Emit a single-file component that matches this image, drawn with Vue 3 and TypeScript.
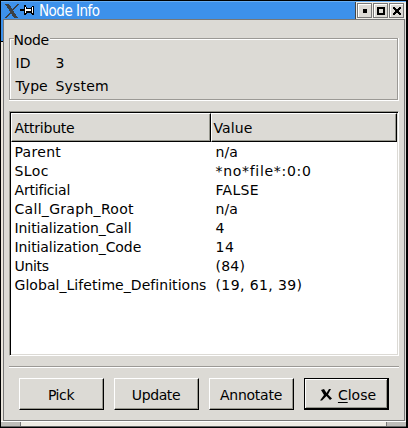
<script setup lang="ts">
interface Label {
  text: string
  tracking: number
}

interface Attribute {
  name: Label
  value: Label
}

const label = (text: string, tracking = 0): Label => ({ text, tracking })
const spacing = (item: Label) => ({ letterSpacing: `${item.tracking}px` })

const attributes: Attribute[] = [
  { name: label('Parent', 0.3), value: label('n/a', 0.1) },
  { name: label('SLoc', 0.4), value: label('*no*file*:0:0', 0.7) },
  { name: label('Artificial', -0.2), value: label('FALSE', 0.3) },
  { name: label('Call_Graph_Root', 0.3), value: label('n/a', 0.1) },
  { name: label('Initialization_Call', -0.08), value: label('4') },
  { name: label('Initialization_Code', -0.08), value: label('14', 0.5) },
  { name: label('Units', -0.3), value: label('(84)', 0.2) },
  { name: label('Global_Lifetime_Definitions', 0.05), value: label('(19, 61, 39)', 0.4) },
]
const actions: Label[] = [label('Pick', -0.4), label('Update', -0.4), label('Annotate', -0.25)]
</script>

<template>
  <div class="window">
    <header class="titlebar">
      <svg class="logo" width="32" height="18" viewBox="0 0 32 18" shape-rendering="crispEdges">
        <path d="M3 3h4l9 14h-4z" fill="#3c4044" />
        <path d="M15 3h2L5 17H3z" fill="#3c4044" />
        <path d="M18 8h5v2h-5z" fill="#000" />
        <path d="M22 4h2v2h1v1h4V6h1V5h2v9h-2v-1h-1v-1h-4v1h-1v1h-2z" fill="#000" />
        <path d="M23 6h1v6h-1zM24 8h5v2h-5zM30 6h1v6h-1z" fill="#fff" />
      </svg>
      <h1 class="title">Node Info</h1>
      <div class="controls">
        <button class="control" aria-label="Minimize">
          <svg width="12" height="12"><path d="M4 4h4v4H4z" /></svg>
        </button>
        <button class="control" aria-label="Maximize">
          <svg width="12" height="12"><path d="M2 2h8v8H2zM4 4v4h4V4z" fill-rule="evenodd" /></svg>
        </button>
        <button class="control" aria-label="Close window">
          <svg width="12" height="12" shape-rendering="crispEdges"><path d="M2 2h2v1h1v1h2V3h1V2h2v2H9v1H8v2h1v1h1v2H8V9H7V8H5v1H4v1H2V8h1V7h1V5H3V4H2z" /></svg>
        </button>
      </div>
    </header>
    <div class="middle">
      <div class="edge"></div>
      <main class="content">
        <fieldset class="group">
          <legend class="legend">Node</legend>
          <div class="groupbox">
            <dl class="fields">
              <dt>ID</dt><dd>3</dd>
              <dt>Type</dt><dd>System</dd>
            </dl>
          </div>
        </fieldset>
        <section class="list">
          <div class="columns">
            <div class="column">Attribute</div>
            <div class="column">Value</div>
          </div>
          <div class="rows">
            <div v-for="item in attributes" :key="item.name.text" class="row">
              <span :style="spacing(item.name)">{{ item.name.text }}</span>
              <span :style="spacing(item.value)">{{ item.value.text }}</span>
            </div>
          </div>
        </section>
        <div class="separator"></div>
        <div class="actions">
          <button v-for="item in actions" :key="item.text" class="action" :style="spacing(item)">{{ item.text }}</button>
          <button class="action default">
            <svg width="12" height="12" viewBox="0 0 12 12"><path d="M1 1l3-1 2.5 4L9 0h2L8 5.5l4 4-2 1.500-3.500-4L2 11.500H0l4-5.500z" /></svg>
            <span><span class="mnemonic">C</span>lose</span>
          </button>
        </div>
      </main>
      <div class="redge"></div>
    </div>
    <footer class="bottom">
      <div class="grip"></div>
      <div class="bar"></div>
      <div class="grip right"></div>
    </footer>
  </div>
</template>

<style>
body {
  margin: 0;
  background: #000;
  overflow: hidden;
}
</style>

<style scoped>
* {
  box-sizing: border-box;
}
.window {
  display: flex;
  flex-direction: column;
  width: 408px;
  height: 428px;
  padding: 1px 2px 1px 1px;
  background: #000;
  font: 14px/19px "DejaVu Sans", sans-serif;
  color: #000;
}
.titlebar {
  display: flex;
  height: 18px;
  flex: none;
  background: #3d91eb;
  border-top: 1px solid #68adf2;
}
.logo {
  margin-top: -1px;
  margin-left: 1px;
  flex: none;
}
.title {
  flex: 1;
  margin: 0 0 0 5px;
  font: 15px/18px "DejaVu Sans Condensed", "DejaVu Sans", sans-serif;
  letter-spacing: -0.5px;
  color: #fff;
}
.controls {
  display: flex;
  gap: 1px;
  height: 17px;
  padding: 1px 2px 0 1px;
  background: #eeece6;
  border-left: 1px solid #444;
}
.control {
  display: flex;
  width: 15px;
  height: 15px;
  padding: 0;
  align-items: center;
  justify-content: center;
  background: #dcdad5;
  border: 1px solid #777;
  box-shadow: inset 1px 1px #fff;
}
.control svg {
  flex: none;
}
.middle {
  display: flex;
  flex: 1;
  min-height: 0;
}
.edge {
  width: 2px;
  background: linear-gradient(#3d91eb 22px, #000 22px, #000 23px, #eae5dc 23px);
}
.redge {
  width: 2px;
  background: linear-gradient(90deg, #dcdad5 1px, #777 1px);
}
.content {
  display: flex;
  flex-direction: column;
  width: 402px;
  padding: 11px 5px 0;
  background: #dcdad5;
  border: 1px solid #777;
}
.group {
  display: flex;
  flex-direction: column;
  height: 70px;
  width: 390px;
  min-width: 0;
  margin: 0;
  padding: 0;
  border: 0;
}
.legend {
  float: left;
  width: max-content;
  height: 16px;
  margin: 0 0 -9px 5px;
  padding: 0 1px 0 0;
  line-height: 18px;
  letter-spacing: -0.3px;
  background: #dcdad5;
  z-index: 1;
  position: relative;
}
.groupbox {
  height: 62px;
  width: 389px;
  border: 1px solid #9b9995;
  box-shadow: inset 1px 1px #fff, 0 1px #fff, 1px 1px #fff, 1px 0 #fff;
}
.fields {
  display: grid;
  grid-template-columns: 40px 1fr;
  grid-auto-rows: 23px;
  margin: 0;
  padding: 13px 0 0 6px;
  line-height: 23px;
}
.fields dd {
  margin: 0;
  letter-spacing: 0.2px;
}
.list {
  display: flex;
  flex-direction: column;
  width: 390px;
  height: 245px;
  margin-top: 10px;
  background: #fff;
  border: 1px solid;
  border-color: #97978e #fff #fff #97978e;
  box-shadow: inset 1px 1px #000, inset -1px -1px #dcdad5;
}
.columns {
  display: flex;
  width: 386px;
  height: 30px;
  margin-left: 1px;
  padding-top: 1px;
}
.column {
  width: 200px;
  padding: 2px 0 0 3px;
  line-height: 25px;
  letter-spacing: -0.2px;
  background: #dcdad5;
  border: 1px solid;
  border-color: #fff #000 #000 #fff;
  box-shadow: inset -1px -1px #97978e;
}
.column:last-child {
  width: 186px;
  padding-left: 2px;
  letter-spacing: 0.1px;
}
.rows {
  padding: 1px 0 0 5px;
}
.row {
  display: grid;
  grid-template-columns: 201px 1fr;
  height: 19px;
  line-height: 19px;
  white-space: nowrap;
}
.separator {
  height: 2px;
  margin-top: 10px;
  border-top: 1px solid #9b9995;
  border-bottom: 1px solid #fff;
}
.actions {
  display: flex;
  gap: 10px;
  margin: 10px 0 0 10px;
}
.action {
  display: flex;
  width: 85px;
  height: 32px;
  align-items: center;
  justify-content: center;
  padding: 2px 0 0;
  font: inherit;
  color: #000;
  background: #dcdad5;
  border: 1px solid;
  border-color: #fff #000 #000 #fff;
  box-shadow: inset -1px -1px #97978e;
}
.default {
  gap: 6px;
  padding-left: 4px;
  border: 1px solid #000;
  box-shadow: inset -1px -1px #000, inset 1px 1px #fff, inset -2px -2px #97978e;
}
.mnemonic {
  text-decoration: underline;
  text-underline-offset: 2px;
  text-decoration-thickness: 1px;
}
.bottom {
  display: flex;
  height: 6px;
  flex: none;
  border-top: 1px solid #fff;
  border-bottom: 1px solid #666;
  background: #eeece4;
}
.bar {
  flex: 1;
}
.grip {
  width: 20px;
  background: #bebdb9;
  border-right: 1px solid #777;
}
.right {
  border-right: 0;
  border-left: 1px solid #777;
}
</style>
